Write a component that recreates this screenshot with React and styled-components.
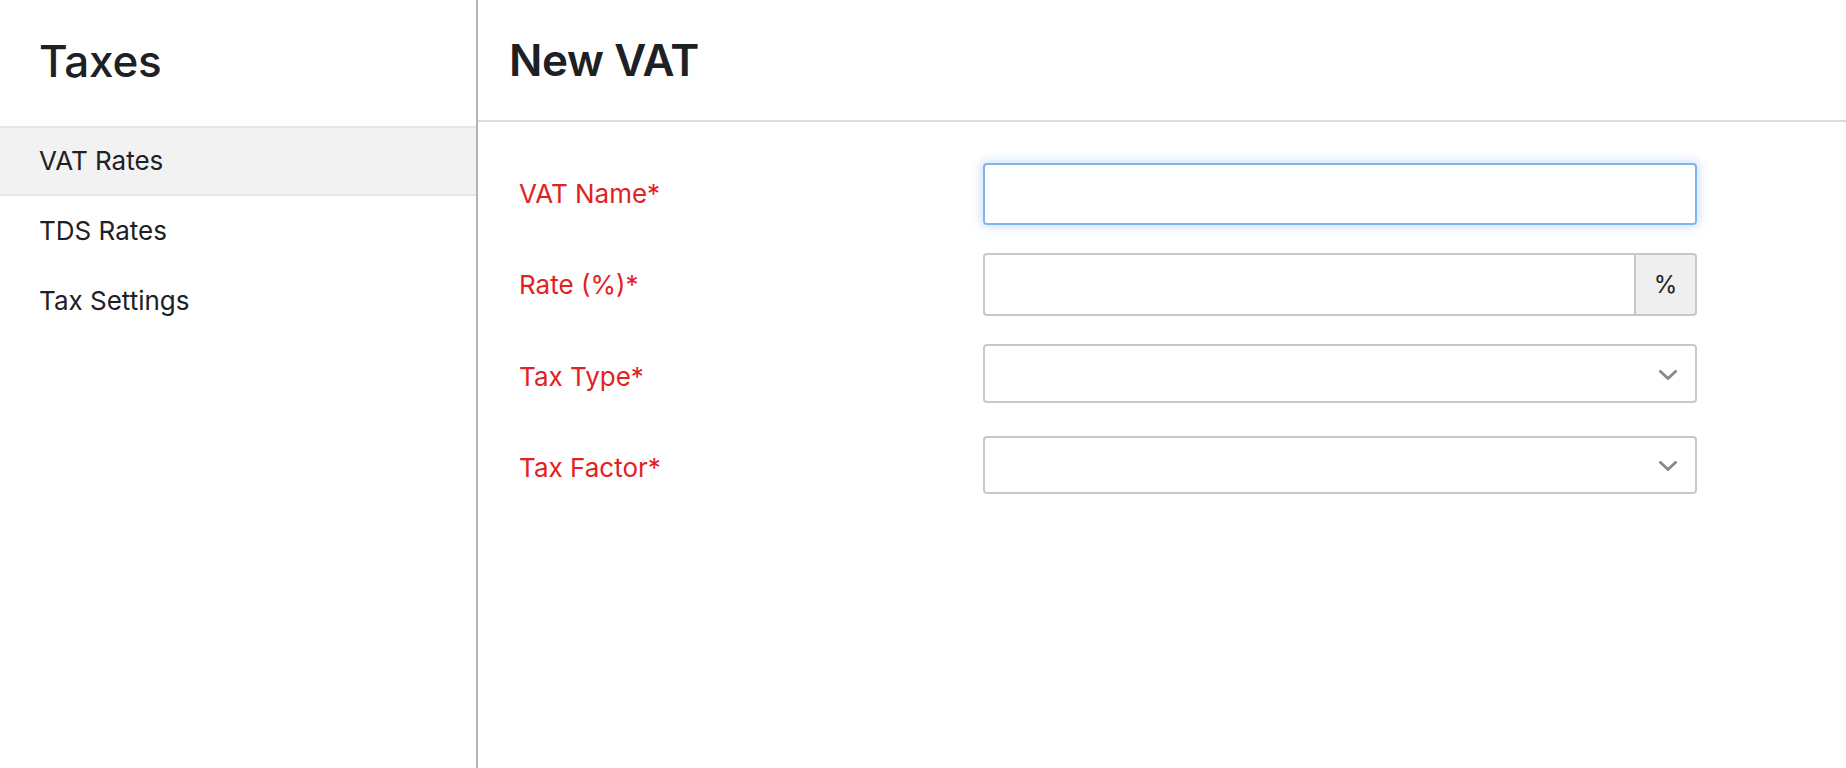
import React from "react";
import styled, { createGlobalStyle } from "styled-components";

const GlobalStyle = createGlobalStyle`
  * { box-sizing: border-box; }
  html, body { margin: 0; padding: 0; background: #ffffff; }
  body { font-family: Inter, "Noto Sans", "Liberation Sans", sans-serif; color: #1d2125; }
`;

const Page = styled.div`
  display: flex;
  min-height: 100vh;
  width: 100%;
`;

const Sidebar = styled.aside`
  width: 478px;
  flex: none;
  border-right: 2px solid #b3b3b3;
  display: flex;
  flex-direction: column;
`;

const SideTitle = styled.h1`
  margin: 0;
  height: 126px;
  padding: 33px 0 0 39px;
  font-size: 44px;
  line-height: 56px;
  font-weight: 500;
  letter-spacing: -0.2px;
  color: #1d2125;
`;

const NavList = styled.nav`
  display: flex;
  flex-direction: column;
`;

const NavItem = styled.div`
  height: 70px;
  display: flex;
  align-items: center;
  padding-left: 39px;
  font-size: 26px;
  line-height: 32px;
  font-weight: 400;
  color: #1d2125;
  border-top: 2px solid ${(p) => (p.$active ? "#e6e6e6" : "transparent")};
  border-bottom: 2px solid ${(p) => (p.$active ? "#e6e6e6" : "transparent")};
  background: ${(p) => (p.$active ? "#f2f2f2" : "transparent")};
`;

const Main = styled.main`
  flex: 1;
  display: flex;
  flex-direction: column;
`;

const MainHeader = styled.header`
  height: 122px;
  border-bottom: 2px solid #d9dde0;
  padding: 32px 0 0 31px;
`;

const MainTitle = styled.h2`
  margin: 0;
  font-size: 44px;
  line-height: 56px;
  font-weight: 600;
  letter-spacing: -0.4px;
  color: #1d2125;
`;

const Form = styled.form`
  display: flex;
  flex-direction: column;
  padding: 41px 0 0 41px;
`;

const Row = styled.div`
  display: flex;
  align-items: center;
  margin-top: ${(p) => p.$gap || 0}px;
`;

const Label = styled.label`
  width: 464px;
  flex: none;
  font-size: 26px;
  line-height: 32px;
  color: #e22222;
  font-weight: 400;
  position: relative;
  top: ${(p) => p.$shift || 0}px;
`;

const Field = styled.div`
  width: 714px;
  flex: none;
  display: flex;
  position: relative;
`;

const TextInput = styled.input`
  flex: 1;
  min-width: 0;
  height: ${(p) => p.$h}px;
  border: 2px solid ${(p) => (p.$focus ? "#7fb4ef" : "#c3c9ce")};
  border-radius: ${(p) => (p.$grouped ? "4px 0 0 4px" : "4px")};
  box-shadow: ${(p) => (p.$focus ? "0 0 10px 3px rgba(110, 165, 235, 0.28)" : "none")};
  font-family: inherit;
  font-size: 24px;
  padding: 0 16px;
  outline: none;
  background: #ffffff;
`;

const Addon = styled.span`
  width: 63px;
  flex: none;
  display: flex;
  align-items: center;
  justify-content: center;
  background: #efefef;
  border: 2px solid #c3c9ce;
  margin-left: -2px;
  border-radius: 0 4px 4px 0;
  font-size: 24px;
  color: #1d2125;
`;

const Select = styled.select`
  width: 100%;
  height: ${(p) => p.$h}px;
  border: 2px solid #c3c9ce;
  border-radius: 4px;
  background: #ffffff;
  appearance: none;
  -webkit-appearance: none;
  font-family: inherit;
  font-size: 24px;
  padding: 0 16px;
  outline: none;
`;

const Chevron = styled.svg`
  position: absolute;
  right: 20px;
  top: 50%;
  margin-top: -4px;
  width: 18px;
  height: 10px;
  pointer-events: none;
`;

const ChevronIcon = () => (
  <Chevron viewBox="0 0 18 10" fill="none">
    <path d="M1.5 1.5 L9 8.5 L16.5 1.5" stroke="#8a8a8a" strokeWidth="3" strokeLinecap="round" strokeLinejoin="round" />
  </Chevron>
);

export default function App() {
  return (
    <>
      <GlobalStyle />
      <Page>
        <Sidebar>
          <SideTitle>Taxes</SideTitle>
          <NavList>
            <NavItem $active>VAT Rates</NavItem>
            <NavItem>TDS Rates</NavItem>
            <NavItem>Tax Settings</NavItem>
          </NavList>
        </Sidebar>
        <Main>
          <MainHeader>
            <MainTitle>New VAT</MainTitle>
          </MainHeader>
          <Form onSubmit={(e) => e.preventDefault()}>
            <Row>
              <Label>VAT Name*</Label>
              <Field>
                <TextInput $h={62} $focus />
              </Field>
            </Row>
            <Row $gap={28}>
              <Label>Rate (%)*</Label>
              <Field>
                <TextInput $h={63} $grouped />
                <Addon>%</Addon>
              </Field>
            </Row>
            <Row $gap={28}>
              <Label $shift={3}>Tax Type*</Label>
              <Field>
                <Select $h={59} defaultValue="">
                  <option value=""></option>
                </Select>
                <ChevronIcon />
              </Field>
            </Row>
            <Row $gap={33}>
              <Label $shift={3}>Tax Factor*</Label>
              <Field>
                <Select $h={58} defaultValue="">
                  <option value=""></option>
                </Select>
                <ChevronIcon />
              </Field>
            </Row>
          </Form>
        </Main>
      </Page>
    </>
  );
}
